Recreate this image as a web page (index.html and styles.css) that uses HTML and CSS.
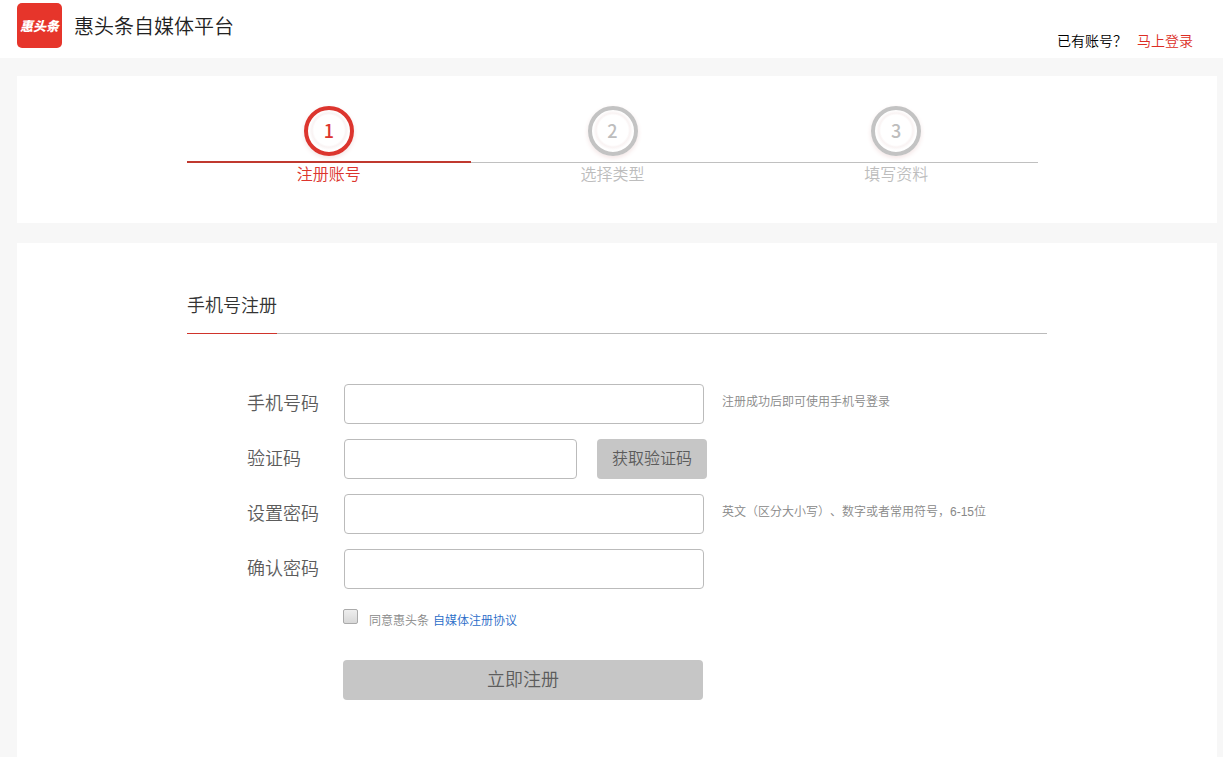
FILE: index.html
```
<!DOCTYPE html>
<html lang="zh-CN">
<head>
    <meta charset="UTF-8">
    <meta name="viewport" content="width=device-width, initial-scale=1.0">
    <title>惠头条自媒体平台</title>
    <link rel="stylesheet" href="styles.css">
</head>
<body>
    <header class="header">
        <div class="logo">惠头条</div>
        <h1>惠头条自媒体平台</h1>
        <p class="login">已有账号？<a href="#">马上登录</a></p>
    </header>

    <main class="main">
        <section class="card steps_card">
            <ol class="steps">
                <li class="on">
                    <span class="num">1</span>
                    <span class="name">注册账号</span>
                </li>
                <li>
                    <span class="num">2</span>
                    <span class="name">选择类型</span>
                </li>
                <li>
                    <span class="num">3</span>
                    <span class="name">填写资料</span>
                </li>
            </ol>
        </section>

        <section class="card form_card">
            <div class="tab">
                <h2>手机号注册</h2>
            </div>
            <form class="form">
                <div class="row">
                    <label for="phone">手机号码</label>
                    <input id="phone" class="text" type="tel">
                    <span class="tip">注册成功后即可使用手机号登录</span>
                </div>
                <div class="row">
                    <label for="code">验证码</label>
                    <input id="code" class="text short" type="text">
                    <button class="code_btn" type="button">获取验证码</button>
                </div>
                <div class="row">
                    <label for="password">设置密码</label>
                    <input id="password" class="text" type="password">
                    <span class="tip">英文（区分大小写）、数字或者常用符号，6-15位</span>
                </div>
                <div class="row">
                    <label for="password2">确认密码</label>
                    <input id="password2" class="text" type="password">
                </div>
                <div class="agree">
                    <input id="agree" type="checkbox">
                    <label for="agree">同意惠头条</label>
                    <a href="#">自媒体注册协议</a>
                </div>
                <button class="submit" type="submit">立即注册</button>
            </form>
        </section>
    </main>
</body>
</html>
```
FILE: styles.css
```
* {
    margin: 0;
    padding: 0;
    box-sizing: border-box;
}
body {
    display: flex;
    flex-direction: column;
    min-height: 100vh;
    font-family: "Liberation Sans", "Noto Sans CJK SC", sans-serif;
    font-weight: 350;
    text-spacing-trim: space-all;
    color: #333;
    background: #f7f7f7;
}
a {
    text-decoration: none;
}
button {
    height: 40px;
    padding-bottom: 4px;
    font-family: inherit;
    font-weight: 350;
    color: #5c5c5c;
    background: #c6c6c6;
    border: none;
    border-radius: 4px;
}

/* 头部 */
.header {
    display: flex;
    height: 58px;
    padding: 3px 30px 0 17px;
    background: #fff;
}
.logo {
    width: 45px;
    height: 45px;
    margin-right: 12px;
    line-height: 48px;
    text-align: center;
    font-weight: 900;
    font-style: italic;
    font-size: 13px;
    white-space: nowrap;
    color: #fff;
    background: #e6352b;
    border-radius: 5px;
}
h1 {
    font-weight: 350;
    font-size: 20px;
    line-height: 48px;
    color: #222;
}
.login {
    margin-left: auto;
    padding-top: 28px;
    font-size: 14px;
    line-height: 20px;
    color: #000;
}
.login a {
    margin-left: 10px;
    color: #dc2d24;
}

.main {
    display: flex;
    flex: 1;
    flex-direction: column;
    padding: 18px 6px 0 17px;
}
.card {
    padding: 0 170px;
    background: #fff;
}

/* 步骤 */
.steps_card {
    margin-bottom: 20px;
    padding-top: 30px;
    padding-bottom: 36px;
}
.steps {
    display: flex;
    max-width: 851px;
    list-style: none;
}
.steps li {
    display: flex;
    flex: 1;
    flex-direction: column;
    align-items: center;
    color: #bdbdbd;
}
.num {
    width: 50px;
    height: 50px;
    margin-bottom: 5px;
    line-height: 40px;
    text-align: center;
    font-family: "Noto Sans CJK SC", sans-serif;
    font-weight: 500;
    font-size: 18px;
    background: radial-gradient(circle at 50% 48%, #fff 15px, #f9f3f3 17px, #fff 20px);
    border: 4px solid #c3c3c3;
    border-radius: 50%;
    box-shadow: 0 2px 5px #f3e4e4;
}
.name {
    width: 100%;
    height: 26px;
    padding-top: 2px;
    line-height: 24px;
    text-align: center;
    font-size: 16px;
    box-shadow: inset 0 1px #fff, inset 0 2px #c0c0c0;
}
.steps .on {
    color: #dc352e;
}
.on .num {
    border-color: #dc352e;
}
.on .name {
    box-shadow: inset 0 2px #c0392f;
}

/* 注册表单 */
.form_card {
    flex: 1;
    padding-top: 44px;
    padding-bottom: 50px;
}
.tab {
    max-width: 860px;
    margin-bottom: 50px;
    border-bottom: 1px solid #bbb;
}
h2 {
    display: inline-block;
    height: 47px;
    margin-bottom: -1px;
    vertical-align: top;
    font-weight: 350;
    font-size: 18px;
    line-height: 38px;
    border-bottom: 1px solid #d0342b;
}
.form {
    padding-left: 60px;
}
.row {
    display: flex;
    margin-bottom: 15px;
}
.row label {
    width: 97px;
    font-size: 18px;
    line-height: 40px;
    color: #5c5c5c;
}
.text {
    width: 360px;
    height: 40px;
    padding: 0 10px;
    font-size: 16px;
    background: #fff;
    border: 1px solid #bbb;
    border-radius: 4px;
}
.short {
    width: 233px;
}
.tip {
    margin-left: 18px;
    font-size: 12px;
    line-height: 36px;
    color: #888;
}
.code_btn {
    width: 110px;
    margin-left: 20px;
    font-size: 16px;
}
.agree {
    display: flex;
    margin: 20px 0 26px 96px;
    font-size: 12px;
    line-height: 25px;
}
.agree input {
    width: 15px;
    height: 15px;
    margin-right: 11px;
    appearance: none;
    background: linear-gradient(#eee, #d8d8d8);
    border: 1px solid #aaa;
    border-radius: 2px;
}
.agree label {
    color: #888;
}
.agree a {
    margin-left: 4px;
    color: #2a6cc8;
}
.submit {
    width: 360px;
    margin-left: 96px;
    font-size: 18px;
}
```
